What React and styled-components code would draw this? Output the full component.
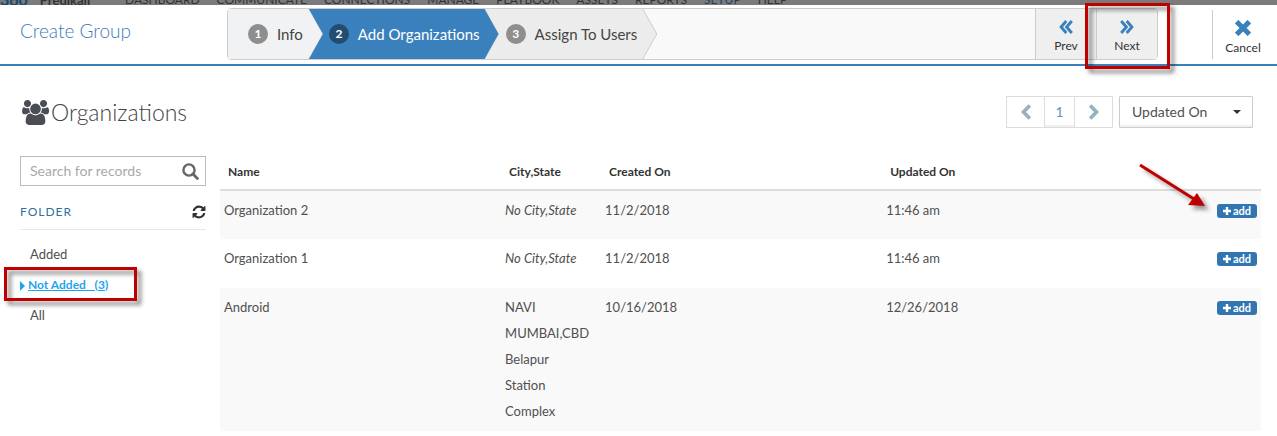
import React, { useState } from "react";
import styled, { createGlobalStyle, css } from "styled-components";

const menu = ["DASHBOARD", "COMMUNICATE", "CONNECTIONS", "MANAGE", "PLAYBOOK", "ASSETS", "REPORTS", "SETUP", "HELP"];

const steps = ["Info", "Add Organizations", "Assign To Users"];

const folders = [{ label: "Added" }, { label: "Not Added", count: 3 }, { label: "All" }];

const organizations = [
  { name: "Organization 2", city: "", created: "11/2/2018", updated: "11:46 am" },
  { name: "Organization 1", city: "", created: "11/2/2018", updated: "11:46 am" },
  {
    name: "Android",
    city: "NAVI MUMBAI,CBD Belapur Station Complex",
    created: "10/16/2018",
    updated: "12/26/2018",
  },
];

const DoubleChevron = ({ flip }) => (
  <svg width="14" height="14" viewBox="0 0 14 14" aria-hidden="true">
    <g fill="none" stroke="#3a80bd" strokeWidth="2.9" transform={flip ? "matrix(-1 0 0 1 14 0)" : undefined}>
      <path d="M7.3 1 2.1 7l5.2 6M12.8 1 7.6 7l5.2 6" />
    </g>
  </svg>
);

const Chevron = ({ flip }) => (
  <svg width="12" height="16" viewBox="0 0 12 16" aria-hidden="true">
    <path
      d={flip ? "M2.2 1.5 8.5 8l-6.3 6.5" : "M9.8 1.5 3.5 8l6.3 6.5"}
      fill="none"
      stroke="#93b1c1"
      strokeWidth="3.6"
    />
  </svg>
);

const CloseIcon = () => (
  <svg width="16" height="16" viewBox="0 0 16 16" aria-hidden="true">
    <path d="m3.4 3.4 9.2 9.2M12.6 3.4l-9.2 9.2" stroke="#3a80bd" strokeWidth="5" strokeLinecap="square" />
  </svg>
);

const UsersIcon = () => (
  <svg width="27" height="25" viewBox="0 -256 1920 1792" aria-hidden="true">
    <path
      fill="#4a4d54"
      d="M593 640q-162 5-265 128h-134q-82 0-138-40.5t-56-118.5q0-353 124-353 6 0 43.5 21t97.5 42.5 119 21.5q67 0 133-23-5 37-5 66 0 159 93 256zm1071 637q0 120-73 189.5t-194 69.5h-874q-121 0-194-69.5t-73-189.5q0-53 3.5-103.5t14-109 26.5-108.5 43-97.5 62-81 85.5-53.5 111.5-20q10 0 43 21.5t73 48 107 48 135 21.5 135-21.5 107-48 73-48 43-21.5q61 0 111.5 20t85.5 53.5 62 81 43 97.5 26.5 108.5 14 109 3.5 103.5zm-1024-1277q0 106-75 181t-181 75-181-75-75-181 75-181 181-75 181 75 75 181zm704 384q0 159-112.5 271.5t-271.5 112.5-271.5-112.5-112.5-271.5 112.5-271.5 271.5-112.5 271.5 112.5 112.5 271.5zm576 225q0 78-56 118.5t-138 40.5h-134q-103-123-265-128 93-97 93-256 0-29-5-66 66 23 133 23 59 0 119-21.5t97.5-42.5 43.5-21q124 0 124 353zm-128-609q0 106-75 181t-181 75-181-75-75-181 75-181 181-75 181 75 75 181z"
    />
  </svg>
);

const SearchIcon = () => (
  <svg width="17" height="17" viewBox="0 0 17 17" aria-hidden="true">
    <circle cx="7" cy="7" r="5.6" fill="none" stroke="#666" strokeWidth="2.4" />
    <path d="m11 11 4.4 4.4" stroke="#666" strokeWidth="2.8" strokeLinecap="round" />
  </svg>
);

const RefreshIcon = () => (
  <svg width="14" height="14" viewBox="64 64 1664 1664" aria-hidden="true">
    <path
      fill="#333"
      d="M1639 1056q0 5-1 7-64 268-268 434.5t-478 166.5q-146 0-282.5-55t-243.5-157l-129 129q-19 19-45 19t-45-19-19-45v-448q0-26 19-45t45-19h448q26 0 45 19t19 45-19 45l-137 137q71 66 161 102t187 36q134 0 250-65t186-179q11-17 53-117 8-23 30-23h192q13 0 22.5 9.5t9.5 22.5zm25-800v448q0 26-19 45t-45 19h-448q-26 0-45-19t-19-45 19-45l138-138q-148-137-349-137-134 0-250 65t-186 179q-11 17-53 117-8 23-30 23h-199q-13 0-22.5-9.5t-9.5-22.5v-7q65-268 270-434.5t480-166.5q146 0 284 55.5t245 156.5l130-129q19-19 45-19t45 19 19 45z"
    />
  </svg>
);

const PlusIcon = () => (
  <svg width="8" height="8" viewBox="0 0 8 8" aria-hidden="true">
    <path d="M4 0v8M0 4h8" stroke="#fff" strokeWidth="2.4" />
  </svg>
);

export default function App() {
  const [step, setStep] = useState(1);
  const [folder, setFolder] = useState("Not Added");

  return (
    <>
      <GlobalStyle />
      <TopBar>
        <Logo>
          <b>360</b>
          <u>Predikail</u>
        </Logo>
        {menu.map((item) => (
          <MenuLink key={item} href="#" $active={item === "SETUP"}>
            {item}
          </MenuLink>
        ))}
      </TopBar>

      <Header>
        <Title>Create Group</Title>
        <Wizard>
          <Steps>
            {steps.map((label, i) => (
              <StepEdge key={label} $order={steps.length - i} $last={i === steps.length - 1}>
                <Step type="button" $index={i} $active={i === step} onClick={() => setStep(i)}>
                  <StepNumber $active={i === step}>{i + 1}</StepNumber>
                  {label}
                </Step>
              </StepEdge>
            ))}
          </Steps>
          <WizardButton type="button" onClick={() => setStep(Math.max(step - 1, 0))}>
            <DoubleChevron />
            Prev
          </WizardButton>
          <WizardButton type="button" onClick={() => setStep(Math.min(step + 1, 2))}>
            <DoubleChevron flip />
            Next
            <NextMark />
          </WizardButton>
        </Wizard>
        <CancelButton type="button">
          <CloseIcon />
          Cancel
        </CancelButton>
      </Header>

      <PageHead>
        <Heading>
          <UsersIcon />
          Organizations
        </Heading>
        <Pager>
          <PageButton type="button" aria-label="Previous page">
            <Chevron />
          </PageButton>
          <PageButton type="button" $current>
            1
          </PageButton>
          <PageButton type="button" aria-label="Next page">
            <Chevron flip />
          </PageButton>
        </Pager>
        <SortBox>
          <Sort aria-label="Sort by" defaultValue="Updated On">
            <option>Updated On</option>
            <option>Created On</option>
            <option>Name</option>
          </Sort>
          <SortCaret />
        </SortBox>
      </PageHead>

      <Main>
        <Sidebar>
          <SearchBox>
            <SearchInput type="text" placeholder="Search for records" aria-label="Search for records" />
            <IconButton type="button" aria-label="Search">
              <SearchIcon />
            </IconButton>
          </SearchBox>
          <FolderHead>
            <FolderTitle>FOLDER</FolderTitle>
            <IconButton type="button" aria-label="Refresh">
              <RefreshIcon />
            </IconButton>
          </FolderHead>
          <FolderList>
            {folders.map(({ label, count }) => (
              <FolderItem key={label}>
                <FolderLink href="#" $active={label === folder} onClick={() => setFolder(label)}>
                  {label === folder && <FolderCaret />}
                  {label}
                  {count && <>&nbsp;&nbsp; ({count})</>}
                </FolderLink>
                {label === "Not Added" && <FolderMark />}
              </FolderItem>
            ))}
          </FolderList>
        </Sidebar>

        <Table>
          <thead>
            <tr>
              <Th $width="27%">Name</Th>
              <Th $width="100px">City,State</Th>
              <Th $width="27%">Created On</Th>
              <Th>Updated On</Th>
              <Th $width="60px" aria-label="Actions" />
            </tr>
          </thead>
          <tbody>
            {organizations.map((org, i) => (
              <Row key={org.name}>
                <Td>{org.name}</Td>
                <Td $gap="10px">{org.city || <em>No City,State</em>}</Td>
                <Td>{org.created}</Td>
                <Td>{org.updated}</Td>
                <Td>
                  <AddCell>
                    <AddButton type="button">
                      <PlusIcon />
                      add
                    </AddButton>
                    {i === 0 && (
                      <Arrow width="80" height="64" viewBox="0 0 80 64" aria-hidden="true">
                        <path d="m4 4 54 34" stroke="#c00000" strokeWidth="3" />
                        <path d="m69 45-17-1 9-12z" fill="#c00000" />
                      </Arrow>
                    )}
                  </AddCell>
                </Td>
              </Row>
            ))}
          </tbody>
        </Table>
      </Main>
    </>
  );
}

const GlobalStyle = createGlobalStyle`
  * {
    box-sizing: border-box;
  }
  body {
    margin: 0;
    background: #fff;
    color: #505050;
    font: 13px/26px Lato, "Open Sans", sans-serif;
  }
  button, input, select {
    font: inherit;
    color: inherit;
  }
  button {
    cursor: pointer;
  }
`;

const mark = css`
  position: absolute;
  border: 3px solid #c00000;
  filter: drop-shadow(4px 4px 2px rgba(0, 0, 0, 0.5));
  pointer-events: none;
`;

const TopBar = styled.nav`
  display: flex;
  align-items: flex-end;
  gap: 17px;
  height: 5px;
  overflow: hidden;
  background: #7b7b7b;
  font-size: 12px;
  line-height: 10px;
`;

const Logo = styled.div`
  display: flex;
  gap: 12px;
  width: 108px;
  flex: none;
  white-space: nowrap;
  color: #333;
  font-size: 13px;
  font-weight: bold;
  b {
    color: #1c4d70;
    font-size: 16px;
  }
`;

const MenuLink = styled.a`
  color: ${({ $active }) => ($active ? "#23405f" : "#333")};
  text-decoration: none;
`;

const Header = styled.header`
  display: flex;
  padding: 3px 0 4px 20px;
  border-bottom: 2px solid #3a80bd;
`;

const Title = styled.h1`
  width: 207px;
  margin: 0;
  color: #3f7cb5;
  font-size: 19px;
  font-weight: 300;
  line-height: 46px;
`;

const Wizard = styled.div`
  display: flex;
  flex: 1;
  height: 52px;
  border: 1px solid #ccc;
  border-radius: 4px;
  background: #f9f9f9;
`;

const Steps = styled.div`
  display: flex;
  flex: 1;
`;

const arrowShape = css`
  clip-path: polygon(0 0, calc(100% - 14px) 0, 100% 50%, calc(100% - 14px) 100%, 0 100%);
`;

const StepEdge = styled.div`
  position: relative;
  z-index: ${({ $order }) => $order};
  padding-right: 1px;
  background: ${({ $last }) => ($last ? "#ccc" : "#e4e4e4")};
  ${arrowShape}
  & + & {
    margin-left: -14px;
  }
`;

const Step = styled.button`
  display: flex;
  align-items: center;
  gap: 9px;
  height: 100%;
  padding: 0 19px 0 20px;
  border: none;
  background: ${({ $active, $index }) => ($active ? "#3a80bd" : $index === 0 ? "#f1f2f4" : "#ececec")};
  color: ${({ $active }) => ($active ? "#fff" : "#444")};
  font-size: 15px;
  white-space: nowrap;
  ${arrowShape}
`;

const StepNumber = styled.span`
  width: 20px;
  height: 20px;
  border-radius: 50%;
  background: ${({ $active }) => ($active ? "#224d71" : "#8e8e8e")};
  color: #fff;
  font-size: 12px;
  font-weight: bold;
  line-height: 20px;
`;

const toolButton = css`
  display: flex;
  flex-direction: column;
  align-items: center;
  gap: 4px;
  border: none;
  border-left: 1px solid #ccc;
  color: #333;
  font-size: 12px;
  line-height: 16px;
`;

const WizardButton = styled.button`
  ${toolButton}
  position: relative;
  width: 61px;
  padding: 11px 0 0;
  background: #efefef;
`;

const NextMark = styled.span`
  ${mark}
  inset: -6px -13px -10px -12px;
  z-index: 5;
`;

const CancelButton = styled.button`
  ${toolButton}
  width: 65px;
  margin: 2px 0 1px 54px;
  padding: 10px 4px 0 0;
  background: none;
`;

const PageHead = styled.div`
  display: flex;
  align-items: center;
  padding: 30px 24px 28px 22px;
`;

const Heading = styled.h2`
  display: flex;
  align-items: center;
  gap: 2px;
  flex: 1;
  margin: 0;
  color: #444;
  font-size: 23px;
  font-weight: 300;
  line-height: 32px;
`;

const Pager = styled.div`
  display: flex;
  margin-right: 6px;
`;

const PageButton = styled.button`
  display: flex;
  align-items: center;
  justify-content: center;
  width: ${({ $current }) => ($current ? "31px" : "38px")};
  height: 32px;
  padding: 0;
  border: solid #ddd;
  border-width: ${({ $current }) => ($current ? "1px" : "1px 0")};
  background: #fff;
  color: #5b8db8;
  box-shadow: ${({ $current }) => ($current ? "inset 0 -2px 0 #f0f0f0" : "none")};
  &:first-child {
    border-left-width: 1px;
  }
  &:last-child {
    border-right-width: 1px;
  }
`;

const SortBox = styled.div`
  position: relative;
`;

const Sort = styled.select`
  width: 134px;
  height: 32px;
  padding: 0 12px;
  border: 1px solid #ccc;
  border-radius: 1px;
  background: #fff;
  box-shadow: inset 0 -2px 0 #f0f0f0;
  appearance: none;
  font-size: 14px;
`;

const SortCaret = styled.span`
  position: absolute;
  top: 14px;
  right: 12px;
  border: solid transparent;
  border-width: 4px 4px 0;
  border-top-color: #333;
  pointer-events: none;
`;

const Main = styled.main`
  display: flex;
  align-items: flex-start;
  gap: 14px;
  padding: 0 16px 0 20px;
`;

const Sidebar = styled.aside`
  flex: none;
  width: 186px;
`;

const SearchBox = styled.div`
  display: flex;
  align-items: center;
  height: 30px;
  padding: 0 6px 0 9px;
  border: 1px solid #bbb;
`;

const SearchInput = styled.input`
  flex: 1;
  min-width: 0;
  padding: 0;
  border: none;
  outline: none;
  font-size: 14px;
  &::placeholder {
    color: #aaa;
  }
`;

const IconButton = styled.button`
  display: flex;
  padding: 0;
  border: none;
  background: none;
`;

const FolderHead = styled.div`
  display: flex;
  align-items: center;
  justify-content: space-between;
  margin-top: 8px;
  height: 36px;
  border-bottom: 1px solid #e8e8e8;
`;

const FolderTitle = styled.h3`
  margin: 0;
  color: #33709f;
  font-size: 12px;
  font-weight: normal;
  letter-spacing: 1px;
`;

const FolderList = styled.ul`
  margin: 9px 0 0;
  padding: 0;
  list-style: none;
`;

const FolderItem = styled.li`
  position: relative;
  line-height: 30px;
`;

const FolderLink = styled.a`
  margin-left: 10px;
  color: #505050;
  text-decoration: none;
  ${({ $active }) =>
    $active &&
    css`
      margin-left: 0;
      color: #1ea5ec;
      font-size: 12px;
      font-weight: bold;
      text-decoration: underline;
    `}
`;

const FolderCaret = styled.span`
  display: inline-block;
  margin-right: 3px;
  border: solid transparent;
  border-width: 5px 0 5px 5px;
  border-left-color: #1ea5ec;
  vertical-align: middle;
`;

const FolderMark = styled.span`
  ${mark}
  top: -2px;
  left: -16px;
  width: 133px;
  height: 34px;
`;

const Table = styled.table`
  flex: 1;
  border-collapse: collapse;
  table-layout: fixed;
`;

const Th = styled.th`
  width: ${({ $width }) => $width || "auto"};
  padding: 3px 8px 4px;
  border-bottom: 2px solid #ddd;
  color: #333;
  font-size: 12px;
  text-align: left;
`;

const Row = styled.tr`
  height: 49px;
  vertical-align: top;
  &:nth-child(odd) {
    background: #f9f9f9;
  }
`;

const Td = styled.td`
  padding: 6px ${({ $gap }) => $gap || "4px"} 7px 4px;
`;

const AddCell = styled.div`
  display: flex;
  justify-content: flex-end;
  position: relative;
  padding-top: 7px;
`;

const AddButton = styled.button`
  display: flex;
  align-items: center;
  justify-content: center;
  gap: 2px;
  width: 40px;
  height: 14px;
  padding: 0;
  border: none;
  border-radius: 3px;
  background: #3276b1;
  color: #fff;
  font-size: 11px;
  font-weight: bold;
  line-height: 14px;
`;

const Arrow = styled.svg`
  position: absolute;
  right: 41px;
  bottom: -7px;
  filter: drop-shadow(4px 4px 2px rgba(0, 0, 0, 0.4));
`;
